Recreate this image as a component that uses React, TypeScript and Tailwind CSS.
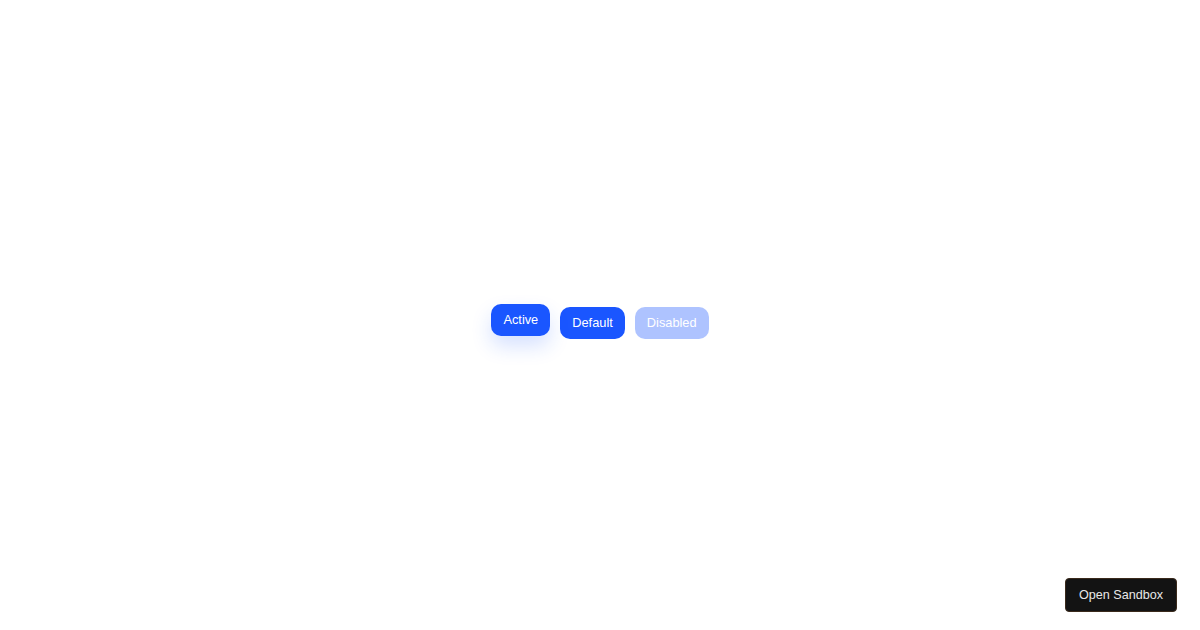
import React from 'react'

const base =
    'h-8 px-3 rounded-[10px] text-[12.8px] text-white bg-[#1a56ff] leading-none'

export default function App() {
    return (
        <div className="relative w-full h-screen bg-white flex items-center justify-center pt-4 font-['Liberation_Sans',Arial,sans-serif]">
            <div className="flex items-center gap-[10px]">
                <button className={`${base} -translate-y-[3px] shadow-[0_10px_20px_rgba(26,86,255,0.18)]`}>
                    Active
                </button>
                <button className={base}>Default</button>
                <button disabled className={`${base} opacity-35`}>
                    Disabled
                </button>
            </div>
            <button className="absolute right-[23px] bottom-[18px] h-[34px] px-[13px] rounded-[4px] bg-[#131313] border border-[#3a2a1c] text-[12.6px] text-[#e8e8e8]">
                Open Sandbox
            </button>
        </div>
    )
}
